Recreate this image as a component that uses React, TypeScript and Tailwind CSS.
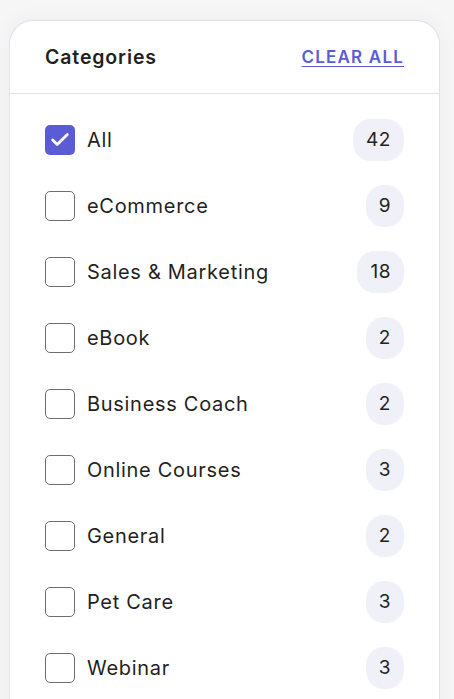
import { Check } from 'lucide-react'

const categories = [
    { name: 'All', count: 42, checked: true },
    { name: 'eCommerce', count: 9 },
    { name: 'Sales & Marketing', count: 18 },
    { name: 'eBook', count: 2 },
    { name: 'Business Coach', count: 2 },
    { name: 'Online Courses', count: 3 },
    { name: 'General', count: 2 },
    { name: 'Pet Care', count: 3 },
    { name: 'Webinar', count: 3 },
]

export default function App() {
    return (
        <div className="min-h-[699px] bg-[#f6f6f7] pl-[9px] pr-[14px] pt-[20px] font-['Inter',sans-serif]">
            <div className="rounded-t-[24px] border border-b-0 border-[#e2def0] bg-white shadow-[0_0_24px_rgba(0,0,0,0.04)]">
                {/* header */}
                <div className="flex h-[73px] items-center justify-between border-b border-[#e2def0] pl-[35px] pr-[35px] pt-[1px]">
                    <h2 className="text-[19.5px] font-semibold tracking-[0.045em] text-[#231f1c]">Categories</h2>
                    <button className="text-[17px] font-semibold tracking-[0.07em] text-[#5b5bd6] underline underline-offset-[3px]">
                        CLEAR ALL
                    </button>
                </div>
                <ul className="pb-4 pt-[13px]">
                    {categories.map((c) => (
                        <li key={c.name} className="flex h-[66px] items-center pl-[35px] pr-[35px]">
                            {c.checked ? (
                                <span className="flex h-[30px] w-[30px] items-center justify-center rounded-[5px] bg-[#5b5bd6]">
                                    <Check className="h-[22px] w-[22px] text-white" strokeWidth={3} />
                                </span>
                            ) : (
                                <span className="h-[30px] w-[30px] rounded-[5px] border-[1.5px] border-[#6e6e6e] bg-white" />
                            )}
                            <span className="ml-[12px] flex-1 text-[20px] tracking-[0.035em] text-[#231f1c]">{c.name}</span>
                            <span className="flex h-[42px] min-w-[36px] items-center justify-center rounded-[18px] bg-[#f0f0f8] px-[13px] text-[19px] tracking-[0.03em] text-[#231f1c]">
                                {c.count}
                            </span>
                        </li>
                    ))}
                </ul>
            </div>
        </div>
    )
}
